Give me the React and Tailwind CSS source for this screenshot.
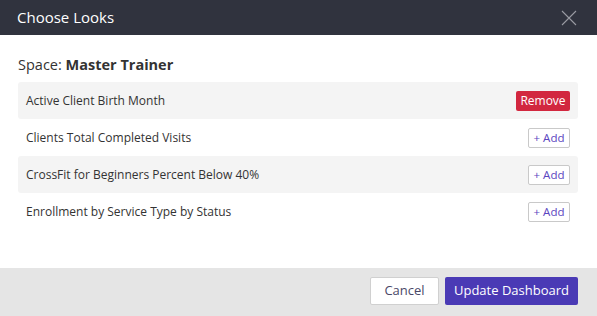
export default function App() {
  const looks = [
    { name: "Active Client Birth Month", added: true },
    { name: "Clients Total Completed Visits", added: false },
    { name: "CrossFit for Beginners Percent Below 40%", added: false },
    { name: "Enrollment by Service Type by Status", added: false },
  ];

  return (
    <div
      className="w-[597px] h-[316px] flex flex-col bg-white text-[#333]"
      style={{ fontFamily: '"Open Sans", sans-serif' }}
    >
      <div className="h-[35px] bg-[#30333e] flex items-center justify-between pl-[17px] pr-[20px]">
        <h1 className="text-white text-[15px] leading-none">Choose Looks</h1>
        <svg width="16" height="16" viewBox="0 0 16 16" className="text-[#9a9ca3]">
          <path d="M1 1L15 15M15 1L1 15" stroke="currentColor" strokeWidth="1.1" />
        </svg>
      </div>

      <div className="flex-1 pl-[18px] pr-[19px] pt-[20px]">
        <p className="text-[14.5px] leading-[20px] mb-[7px]">
          Space: <span className="font-bold">Master Trainer</span>
        </p>
        <ul>
          {looks.map((look, i) => (
            <li
              key={look.name}
              className={
                "h-[37px] flex items-center justify-between pl-[8px] pr-[8px] rounded-[3px] " +
                (i % 2 === 0 ? "bg-[#f4f4f4]" : "")
              }
            >
              <span className="text-[12px]">{look.name}</span>
              {look.added ? (
                <button className="h-[20px] w-[54px] bg-[#d2273f] text-white text-[12px] rounded-[2px] leading-none">
                  Remove
                </button>
              ) : (
                <button className="h-[20px] w-[42px] border border-[#c9c9c9] bg-white text-[#5a45c0] text-[11.5px] rounded-[2px] leading-none">
                  + Add
                </button>
              )}
            </li>
          ))}
        </ul>
      </div>

      <div className="h-[48px] bg-[#e5e5e5] flex items-center justify-end gap-[6px] pr-[19px] pb-[2px]">
        <button className="h-[28px] w-[69px] bg-white border border-[#d0d0d0] rounded-[2px] text-[13px] text-[#4a4868]">
          Cancel
        </button>
        <button className="h-[28px] w-[133px] bg-[#4a3ab5] text-white rounded-[2px] text-[13px]">
          Update Dashboard
        </button>
      </div>
    </div>
  );
}
